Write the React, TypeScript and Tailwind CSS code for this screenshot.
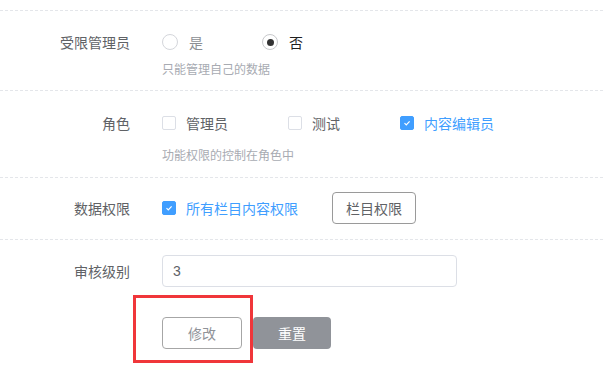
import React from "react";

const font = { fontFamily: '"Noto Sans CJK SC", "Liberation Sans", sans-serif' };

function Radio({ checked, label }: { checked?: boolean; label: string }) {
  return (
    <label className="flex items-center">
      <span
        className={
          "w-4 h-4 rounded-full border flex items-center justify-center " +
          (checked ? "border-[#c8c9cc]" : "border-[#d4d6db]")
        }
      >
        {checked && <span className="w-[7px] h-[7px] rounded-full bg-[#333333]" />}
      </span>
      <span className={"ml-[11px] text-[14px] " + (checked ? "text-[#1f1f1f]" : "text-[#8c8f94]")}>{label}</span>
    </label>
  );
}

function Check({ checked, label }: { checked?: boolean; label: string }) {
  return (
    <label className="flex items-center">
      <span
        className={
          "w-[14px] h-[14px] rounded-[2px] border flex items-center justify-center " +
          (checked ? "bg-[#409eff] border-[#409eff]" : "bg-white border-[#dcdfe6]")
        }
      >
        {checked && (
          <svg width="10" height="10" viewBox="0 0 10 10">
            <path d="M2.5 5.2 L4.3 7 L7.6 3.4" fill="none" stroke="white" strokeWidth="1.2" />
          </svg>
        )}
      </span>
      <span className={"ml-[10px] text-[14px] " + (checked ? "text-[#409eff]" : "text-[#606266]")}>{label}</span>
    </label>
  );
}

export default function App() {
  return (
    <div className="relative w-[603px] h-[374px] bg-white overflow-hidden" style={font}>
      <div className="h-[11px] border-b border-dashed border-[#e4e6ea]" />
      {/* Row 1 */}
      <div className="flex pt-[21px] pb-[12px] border-b border-dashed border-[#e4e6ea]">
        <div className="w-[130px] text-right text-[14px] text-[#606266] leading-5">受限管理员</div>
        <div className="ml-[32px]">
          <div className="flex h-5 items-center gap-[59px]">
            <Radio label="是" />
            <Radio checked label="否" />
          </div>
          <div className="mt-[8px] text-[12px] leading-[18px] text-[#a8abb2]">只能管理自己的数据</div>
        </div>
      </div>
      {/* Row 2 */}
      <div className="flex pt-[22px] pb-[13px] border-b border-dashed border-[#e4e6ea]">
        <div className="w-[130px] text-right text-[14px] text-[#606266] leading-5">角色</div>
        <div className="ml-[32px]">
          <div className="flex h-5 items-center">
            <div className="w-[126px]"><Check label="管理员" /></div>
            <div className="w-[112px]"><Check label="测试" /></div>
            <Check checked label="内容编辑员" />
          </div>
          <div className="mt-[13px] text-[12px] leading-[18px] text-[#a8abb2]">功能权限的控制在角色中</div>
        </div>
      </div>
      {/* Row 3 */}
      <div className="flex items-center pt-[14px] pb-[15px] border-b border-dashed border-[#e4e6ea]">
        <div className="w-[130px] text-right text-[14px] text-[#606266] leading-5">数据权限</div>
        <div className="ml-[32px] flex items-center">
          <Check checked label="所有栏目内容权限" />
          <button className="ml-[34px] w-[84px] h-[32px] rounded-[4px] border border-[#9a9a9a] text-[14px] text-[#606266] bg-white">
            栏目权限
          </button>
        </div>
      </div>
      {/* Row 4 */}
      <div className="flex items-center pt-[15px]">
        <div className="w-[130px] text-right text-[14px] text-[#606266] leading-5">审核级别</div>
        <div className="ml-[32px] w-[295px] h-[32px] rounded-[4px] border border-[#dcdfe6] flex items-center pl-[10px] text-[14px] text-[#606266]" style={{ fontFamily: '"Liberation Sans", sans-serif' }}>
          3
        </div>
      </div>
      {/* Buttons */}
      <div className="flex ml-[162px] mt-[30px] gap-[11px]">
        <button className="w-[80px] h-[32px] rounded-[4px] border border-[#a6a6a6] bg-white text-[14px] text-[#909399]">修改</button>
        <button className="w-[78px] h-[32px] rounded-[4px] bg-[#909399] text-[14px] text-white">重置</button>
      </div>
      <div className="absolute left-[133px] top-[295px] w-[120px] h-[68px] border-[3px] border-[#f0363a]" />
    </div>
  );
}
